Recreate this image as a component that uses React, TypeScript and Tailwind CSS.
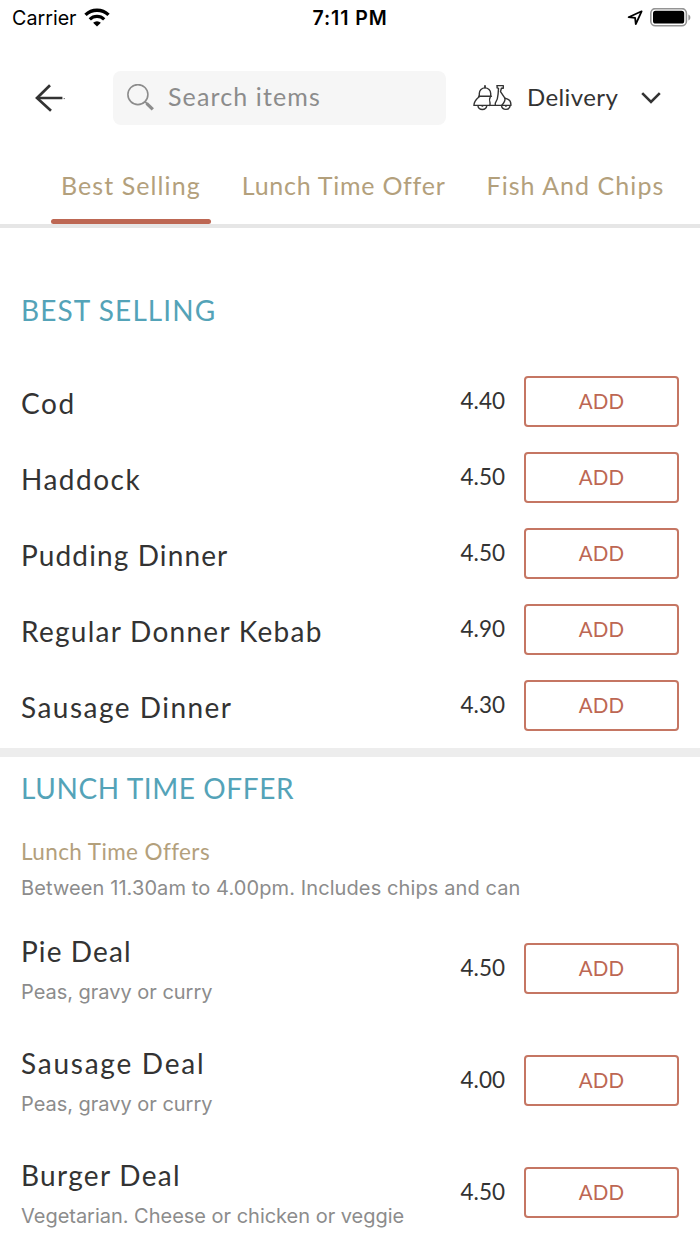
import * as React from "react";

type MenuItem = {
  name: string;
  price: string;
  tracking: string;
  description?: string;
};

const TABS = [
  { label: "Best Selling", active: true, tracking: "tracking-[1.08px]" },
  { label: "Lunch Time Offer", active: false, tracking: "tracking-[0.75px]" },
  { label: "Fish And Chips", active: false, tracking: "tracking-[1.05px]" },
];

const BEST_SELLING: MenuItem[] = [
  { name: "Cod", price: "4.40", tracking: "tracking-[1.6px]" },
  { name: "Haddock", price: "4.50", tracking: "tracking-[1.5px]" },
  { name: "Pudding Dinner", price: "4.50", tracking: "tracking-[1.12px]" },
  { name: "Regular Donner Kebab", price: "4.90", tracking: "tracking-[1.27px]" },
  { name: "Sausage Dinner", price: "4.30", tracking: "tracking-[1.48px]" },
];

const LUNCH_DEALS: MenuItem[] = [
  {
    name: "Pie Deal",
    price: "4.50",
    tracking: "tracking-[1.1px]",
    description: "Peas, gravy or curry",
  },
  {
    name: "Sausage Deal",
    price: "4.00",
    tracking: "tracking-[1.75px]",
    description: "Peas, gravy or curry",
  },
  {
    name: "Burger Deal",
    price: "4.50",
    tracking: "tracking-[1.3px]",
    description: "Vegetarian. Cheese or chicken or veggie",
  },
];

function WifiIcon() {
  return (
    <svg viewBox="0 0 26 20" fill="none" className="h-5 w-[26px]" aria-hidden>
      <path d="M1.5 6.9a16.4 16.4 0 0 1 23 0" stroke="black" strokeWidth="3.4" />
      <path d="M5.8 11.4a10.3 10.3 0 0 1 14.4 0" stroke="black" strokeWidth="3.2" />
      <path d="M13 18.6l-3.9-3.8a5.7 5.7 0 0 1 7.8 0z" fill="black" />
    </svg>
  );
}

function LocationIcon() {
  return (
    <svg viewBox="0 0 16 16" fill="none" className="h-4 w-4" aria-hidden>
      <path d="M14.6 1.3L1.6 7.2l6.5.7.7 6.3z" stroke="black" strokeWidth="1.8" strokeLinejoin="round" />
    </svg>
  );
}

function BatteryIcon() {
  return (
    <svg viewBox="0 0 42 20" fill="none" className="h-5 w-[42px]" aria-hidden>
      <rect x="0.8" y="0.6" width="35.6" height="17.2" rx="4.6" stroke="#949494" strokeWidth="1.6" />
      <rect x="3" y="2.8" width="31.2" height="12.8" rx="2.6" fill="black" />
      <path d="M38.4 6.4c2.6.8 2.6 5.2 0 6z" fill="#949494" />
    </svg>
  );
}

function BackIcon() {
  return (
    <svg viewBox="0 0 32 30" fill="none" className="h-[30px] w-8" aria-hidden>
      <path d="M16 2.2L3 15l14 12.8" stroke="#333" strokeWidth="2.7" />
      <path d="M3 15h25.4" stroke="#333" strokeWidth="2.5" />
      <path d="M29.6 15.6h1.4" stroke="#777" strokeWidth="1" />
    </svg>
  );
}

function SearchIcon() {
  return (
    <svg viewBox="0 0 28 28" fill="none" className="h-7 w-7" aria-hidden>
      <circle cx="10.9" cy="10.6" r="10" stroke="#8c8c8c" strokeWidth="1.6" />
      <path d="M18 17.6l2.3 2.3" stroke="#8c8c8c" strokeWidth="1.8" />
      <path d="M19.6 19.3l6.2 6.1" stroke="#8c8c8c" strokeWidth="3.2" />
    </svg>
  );
}

function ScooterIcon() {
  return (
    <svg
      viewBox="0 0 40 28"
      fill="none"
      stroke="#333"
      strokeWidth="1.4"
      strokeLinejoin="round"
      strokeLinecap="round"
      className="h-7 w-10"
      aria-hidden
    >
      <path d="M12 2v1.4" strokeWidth="1.8" />
      <path d="M6.3 11.4V9.6a5.7 5.7 0 0 1 11.4 0v1.8" />
      <path d="M5.6 12.3h12.8" />
      <path d="M6.4 12.6C3.6 15 .9 17 .9 21.4h15.2" />
      <path d="M17.4 12.6c-1.6 2.6-1 4.4-.4 6.2.2 1 .2 1.8-.4 2.6" />
      <path d="M16.6 21.4h11.8" />
      <path d="M24.1 1.6h6.2v2.6h-1.9l-.9 3.4 4.4 6.6c.6 2.6-1.3 5.2-3.2 7.2" />
      <path d="M24.1 1.6v2.2l1.4.6-.4 5.6c-.2 4.2-1.2 7-2.8 9.2v2.2" />
      <path d="M31.9 14.2c3.4.6 6 2.6 6 6.2v1h-9.5" />
      <path d="M4.9 21.6a4.5 4.5 0 0 0 8.9 0" />
      <path d="M28.5 21.6a4.4 4.4 0 0 0 8.7 0" />
      <path d="M8.2 21.9a1.4 1.4 0 0 0 2.4 0M31.7 21.9a1.4 1.4 0 0 0 2.4 0" strokeWidth="1" />
    </svg>
  );
}

function StatusBar() {
  return (
    <div className="grid h-9 grid-cols-[1fr_auto_1fr] items-center pl-3 pr-2 font-['Inter',sans-serif] text-black">
      <div className="flex items-center gap-[7px]">
        <span className="pt-0.5 text-[19.7px]">Carrier</span>
        <WifiIcon />
      </div>
      <span className="mr-1 pt-0.5 text-[19.5px] font-semibold tracking-[0.9px]">7:11 PM</span>
      <div className="flex items-center justify-end gap-[7px]">
        <LocationIcon />
        <BatteryIcon />
      </div>
    </div>
  );
}

function TopBar() {
  return (
    <header className="mt-[35px] flex h-[54px] items-center pl-[34px]">
      <button type="button" aria-label="Back">
        <BackIcon />
      </button>
      <div className="ml-[47px] flex h-full w-[333px] items-center gap-[13px] rounded-lg bg-[#f6f6f6] pl-3.5">
        <SearchIcon />
        <span className="pb-0.5 text-[25px] tracking-[1.12px] text-[#8c8c8c]">Search items</span>
      </div>
      <button type="button" className="ml-[27px] flex items-center">
        <ScooterIcon />
        <span className="ml-[14px] pb-0.5 text-2xl tracking-[0.4px] text-[#333]">Delivery</span>
        <svg viewBox="0 0 20 12" fill="none" className="ml-[23px] h-3 w-5" aria-hidden>
          <path d="M1.2 1.2L10 10l8.8-8.8" stroke="#333" strokeWidth="2.6" />
        </svg>
      </button>
    </header>
  );
}

function Tabs() {
  return (
    <nav className="mt-[27px] flex h-[76px] gap-[21px] border-b-4 border-[#e6e6e6] pl-[51px]">
      {TABS.map((tab) => (
        <button
          key={tab.label}
          type="button"
          className="flex flex-col justify-between whitespace-nowrap"
        >
          <span className={`px-2.5 pt-[15px] text-[25px] text-[#b3a07c] ${tab.tracking}`}>{tab.label}</span>
          {tab.active && <span className="h-[5px] w-full rounded-full bg-[#bd6753]" />}
        </button>
      ))}
    </nav>
  );
}

function AddButton() {
  return (
    <button
      type="button"
      className="h-[51px] w-[155px] rounded-[4px] border-2 border-[#c57663] text-[20.5px] tracking-[0.2px] text-[#bd6753]"
    >
      ADD
    </button>
  );
}

function MenuRow({ item }: { item: MenuItem }) {
  return (
    <li className={item.description ? "flex h-28 items-start" : "flex h-[76px] items-start"}>
      <div className={item.description ? "flex-1" : "flex-1 pt-2.5"}>
        <p className={`-mt-px text-[28px] leading-9 text-[#333] ${item.tracking}`}>{item.name}</p>
        {item.description && (
          <p className="mt-[11px] font-['Inter',sans-serif] text-xl leading-6 tracking-[-0.02px] text-[#8c8c8c]">
            {item.description}
          </p>
        )}
      </div>
      <div className={item.description ? "flex items-center pt-[9px]" : "flex items-center"}>
        <span className="mr-[19px] pb-0.5 text-[22.5px] text-[#333]">{item.price}</span>
        <AddButton />
      </div>
    </li>
  );
}

export default function App() {
  return (
    <div className="h-[1244px] w-[700px] overflow-hidden bg-white font-['Lato',sans-serif]">
      <StatusBar />
      <TopBar />
      <Tabs />

      <section className="h-[520px] px-[21px] pt-16">
        <h2 className="text-[28px] leading-9 tracking-[1.1px] text-[#54a3b8]">BEST SELLING</h2>
        <ul className="mt-12">
          {BEST_SELLING.map((item) => (
            <MenuRow key={item.name} item={item} />
          ))}
        </ul>
      </section>

      <div className="h-[9px] bg-[#ededed]" />

      <section className="px-[21px] pt-[13px]">
        <h2 className="text-[28px] leading-9 tracking-[0.6px] text-[#54a3b8]">LUNCH TIME OFFER</h2>
        <h3 className="mt-8 text-[22.5px] leading-7 tracking-[0.4px] text-[#b3a07c]">Lunch Time Offers</h3>
        <p className="mt-2.5 font-['Inter',sans-serif] text-xl leading-6 tracking-[0.1px] text-[#8c8c8c]">
          Between 11.30am to 4.00pm. Includes chips and can
        </p>
        <ul className="mt-[34px]">
          {LUNCH_DEALS.map((item) => (
            <MenuRow key={item.name} item={item} />
          ))}
        </ul>
      </section>
    </div>
  );
}
